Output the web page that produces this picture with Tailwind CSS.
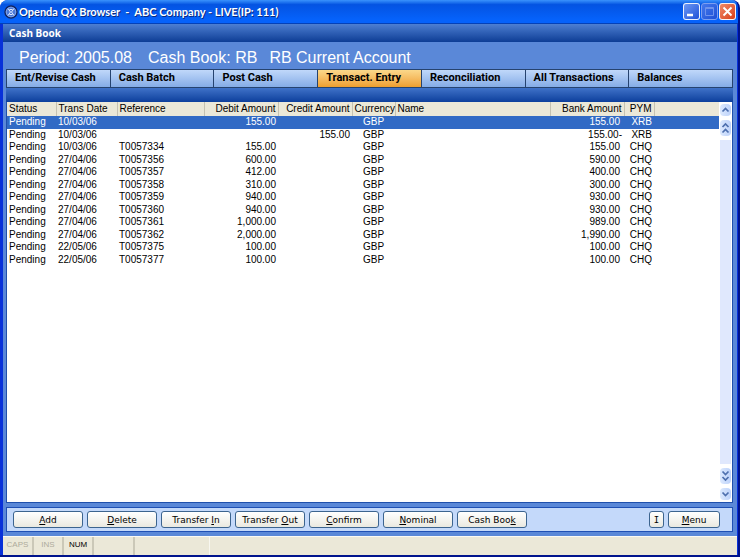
<!DOCTYPE html>
<html lang="en">
  <head>
    <meta charset="UTF-8" />
    <meta name="viewport" content="width=device-width, initial-scale=1.0" />
    <title>Openda QX Browser - Cash Book</title>
    <script src="https://cdn.jsdelivr.net/npm/@tailwindcss/browser@4"></script>
  </head>
  <body class="bg-white font-['Liberation_Sans',Arial,sans-serif] text-black">
    <div class="h-screen flex flex-col rounded-t-lg overflow-hidden bg-[#0831d9] border-b-2 border-r-2 border-[#00138c]">
      <!-- Title bar -->
      <header class="h-6 shrink-0 flex items-center pl-1 pr-0.5 bg-linear-to-b from-[#3a92fc] from-0% via-[#0453e2] via-20% to-[#0562fb] to-85% border-b border-[#0341b8]">
        <svg class="size-3.5 shrink-0" viewBox="0 0 14 14" fill="none">
          <circle cx="7" cy="7" r="6" fill="#4b78d8" stroke="#12235f" stroke-width="1.4" />
          <circle cx="7" cy="7" r="4.8" stroke="#8fb0ee" stroke-width=".8" />
          <path d="M4 3.5 6.5 7 4 10.5M10 3.5 7.5 7l2.500 3.500M5.500 4.500h3M5.500 9.500h3" stroke="#dbe7ff" stroke-width="1" />
        </svg>
        <h1 class="ml-px flex-1 whitespace-pre font-['Lato',sans-serif] text-[11px] leading-4 font-bold text-white text-shadow-[1px_1px_0_#0a2a80]">Openda QX Browser  -  ABC Company - LIVE(IP: 111)</h1>
        <div class="flex gap-px">
          <button aria-label="Minimize" class="size-[17px] rounded-[3px] border border-white/90 bg-linear-to-br from-[#6d97f3] to-[#1f4fd8]">
            <svg viewBox="0 0 15 15"><path d="M3 11h6" stroke="#fff" stroke-width="2.4" /></svg>
          </button>
          <button aria-label="Maximize" disabled class="size-[17px] rounded-[3px] border border-[#7d9ff0] bg-linear-to-br from-[#4578ec] to-[#1d4fd6]">
            <svg viewBox="0 0 15 15" fill="none"><path d="M3.5 3.5h8v8h-8zM3 4.5h9" stroke="#6f93ec" /></svg>
          </button>
          <button aria-label="Close" class="size-[17px] rounded-[3px] border border-white/90 bg-linear-to-br from-[#f08a68] to-[#d63a10]">
            <svg viewBox="0 0 15 15"><path d="m3.5 3.5 8 8m0-8-8 8" stroke="#fff" stroke-width="1.9" /></svg>
          </button>
        </div>
      </header>

      <div class="flex-1 min-h-0 ml-[3px] mr-px flex flex-col bg-[#5a88d8]">
        <div class="h-[18px] shrink-0 pl-1.5 flex items-center bg-linear-to-b from-[#4d7fd2] to-[#0d3d95]">
          <h2 class="font-['Noto_Sans',sans-serif] text-[10px] leading-4 font-bold text-white">Cash Book</h2>
        </div>

        <div class="h-[27px] shrink-0 pl-4 pt-1 flex items-center gap-4 text-base leading-5 text-white whitespace-nowrap">
          <span>Period: 2005.08</span>
          <div class="flex gap-3">
            <span>Cash Book: RB</span>
            <span>RB Current Account</span>
          </div>
        </div>

        <main class="flex-1 min-h-0 ml-[3px] mr-1 flex flex-col">
          <!-- Tabs -->
          <nav class="h-[19px] shrink-0 flex border-y border-r border-[#26436f] bg-linear-to-b from-[#c0d8fa] to-[#85ace6] font-['Roboto',sans-serif] text-[11px] leading-4 font-bold">
            <a href="#" class="flex-1 pl-2 border-l border-[#26436f]">Ent/Revise Cash</a>
            <a href="#" class="flex-1 pl-2 border-l border-[#26436f]">Cash Batch</a>
            <a href="#" class="flex-1 pl-2 border-l border-[#26436f]">Post Cash</a>
            <a href="#" class="flex-1 pl-2 border-l border-[#26436f] bg-linear-to-b from-[#fbd88a] to-[#ee9f2c]">Transact. Entry</a>
            <a href="#" class="flex-1 pl-2 border-l border-[#26436f]">Reconciliation</a>
            <a href="#" class="flex-1 pl-2 border-l border-[#26436f]">All Transactions</a>
            <a href="#" class="flex-1 pl-2 border-l border-[#26436f]">Balances</a>
          </nav>
          <div class="h-3.5 shrink-0 bg-linear-to-b from-[#3f72c8] to-[#0c3f9c]"></div>

          <!-- Transactions -->
          <div class="flex-1 min-h-0 flex bg-white border border-t-0 border-[#1f50ac]">
            <div class="flex-1 min-w-0">
              <table class="w-full h-[164px] table-fixed border-collapse text-[10px] leading-3 whitespace-nowrap">
                <colgroup>
                  <col class="w-[49px]" />
                  <col class="w-[61px]" />
                  <col class="w-[87px]" />
                  <col class="w-[74px]" />
                  <col class="w-[74px]" />
                  <col class="w-[43px]" />
                  <col />
                  <col class="w-[74px]" />
                  <col class="w-[30px]" />
                  <col class="w-[65px]" />
                </colgroup>
                <thead>
                  <tr class="h-3.5 bg-[#ebe8d8] text-left [&>th]:font-normal [&>th]:p-0 [&>th]:px-0.5 [&>th]:border-r [&>th]:border-[#c5c2b2]">
                    <th>Status</th>
                    <th>Trans Date</th>
                    <th>Reference</th>
                    <th class="text-right">Debit Amount</th>
                    <th class="text-right">Credit Amount</th>
                    <th>Currency</th>
                    <th>Name</th>
                    <th class="text-right">Bank Amount</th>
                    <th class="text-right">PYM</th>
                    <td></td>
                  </tr>
                </thead>
                <tbody id="rows"></tbody>
              </table>
            </div>
            <!-- Scroll buttons -->
            <div class="w-[13px] shrink-0 pt-0.5 pb-0.5 flex flex-col items-center text-[#4d6fae]">
              <button aria-label="Line up" class="w-[11px] h-3 rounded-sm bg-linear-to-r from-[#dce9fe] to-[#bdd2fa]">
                <svg viewBox="0 0 11 12" fill="none"><path d="m2.5 7.5 3-3 3 3" stroke="currentColor" stroke-width="1.7" /></svg>
              </button>
              <button aria-label="Page up" class="mt-1 w-[11px] h-4 rounded-sm bg-linear-to-r from-[#dce9fe] to-[#bdd2fa]">
                <svg viewBox="0 0 11 16" fill="none"><path d="m2.5 7 3-3 3 3m-6 5.5 3-3 3 3" stroke="currentColor" stroke-width="1.7" /></svg>
              </button>
              <div class="mt-1 flex-1 w-[11px] bg-[#e0e8fd]"></div>
              <button aria-label="Page down" class="mt-1 w-[11px] h-4 rounded-sm bg-linear-to-r from-[#dce9fe] to-[#bdd2fa]">
                <svg viewBox="0 0 11 16" fill="none"><path d="m2.5 3.5 3 3 3-3m-6 5.5 3 3 3-3" stroke="currentColor" stroke-width="1.7" /></svg>
              </button>
              <button aria-label="Line down" class="mt-1 w-[11px] h-3 rounded-sm bg-linear-to-r from-[#dce9fe] to-[#bdd2fa]">
                <svg viewBox="0 0 11 12" fill="none"><path d="m2.5 4.5 3 3 3-3" stroke="currentColor" stroke-width="1.7" /></svg>
              </button>
            </div>
          </div>

          <!-- Actions -->
          <div class="h-[25px] shrink-0 my-1 pl-1.5 pr-3 flex items-center gap-1 bg-[#c4d9fa] border border-[#1f50b4] font-['DejaVu_Sans',Verdana,sans-serif] text-[9px] leading-3 [&>button]:h-[17px] [&>button]:rounded-[3px] [&>button]:border [&>button]:border-[#3c648f] [&>button]:bg-linear-to-b [&>button]:from-white [&>button]:to-[#eae9e0]">
            <button class="w-[70px]"><u>A</u>dd</button>
            <button class="w-[70px]"><u>D</u>elete</button>
            <button class="w-[70px]">Transfer <u>I</u>n</button>
            <button class="w-[70px]">Transfer <u>O</u>ut</button>
            <button class="w-[70px]"><u>C</u>onfirm</button>
            <button class="w-[70px]"><u>N</u>ominal</button>
            <button class="w-[70px]">Cash Boo<u>k</u></button>
            <button class="ml-auto w-[15px] font-['DejaVu_Sans_Mono',monospace]">I</button>
            <button class="w-[52px]"><u>M</u>enu</button>
          </div>
        </main>
      </div>

      <!-- Status bar -->
      <footer class="h-[19px] shrink-0 ml-[3px] mr-px flex bg-[#ebe8d8] border-t border-[#fbfaf4] text-[8px] leading-4 text-center text-[#aeab9c]">
        <span class="w-[31px] border-r-2 border-[#cbc8b8]">CAPS</span>
        <span class="w-[30px] border-r-2 border-[#cbc8b8]">INS</span>
        <span class="w-[30px] border-r-2 border-[#cbc8b8] text-black">NUM</span>
        <span class="w-[41px] border-r-2 border-[#cbc8b8]"></span>
        <span class="w-[75px] border-r border-[#f8f7f0]"></span>
      </footer>
    </div>

    <script>
      // date, reference, debit, credit, bank amount, payment method
      const entries = [
        ["10/03/06", "", "155.00", "", "155.00", "XRB"],
        ["10/03/06", "", "", "155.00", "155.00-", "XRB"],
        ["10/03/06", "T0057334", "155.00", "", "155.00", "CHQ"],
        ["27/04/06", "T0057356", "600.00", "", "590.00", "CHQ"],
        ["27/04/06", "T0057357", "412.00", "", "400.00", "CHQ"],
        ["27/04/06", "T0057358", "310.00", "", "300.00", "CHQ"],
        ["27/04/06", "T0057359", "940.00", "", "930.00", "CHQ"],
        ["27/04/06", "T0057360", "940.00", "", "930.00", "CHQ"],
        ["27/04/06", "T0057361", "1,000.00", "", "989.00", "CHQ"],
        ["27/04/06", "T0057362", "2,000.00", "", "1,990.00", "CHQ"],
        ["22/05/06", "T0057375", "100.00", "", "100.00", "CHQ"],
        ["22/05/06", "T0057377", "100.00", "", "100.00", "CHQ"],
      ];

      document.getElementById("rows").innerHTML = entries
        .map(([date, ref, debit, credit, bank, pym], i) => `
          <tr class="${i === 0 ? "bg-[#316ac5] text-white" : ""}">
            <td class="p-0 px-0.5">Pending</td>
            <td class="p-0 px-0.5">${date}</td>
            <td class="p-0 px-0.5">${ref}</td>
            <td class="p-0 px-0.5 text-right">${debit}</td>
            <td class="p-0 px-0.5 text-right">${credit}</td>
            <td class="p-0 text-center">GBP</td>
            <td class="p-0"></td>
            <td class="p-0 text-right ${bank.endsWith("-") ? "pr-0.5" : "pr-1"}">${bank}</td>
            <td class="p-0 px-0.5 text-right">${pym}</td>
            <td class="p-0"></td>
          </tr>`)
        .join("");
    </script>
  </body>
</html>
